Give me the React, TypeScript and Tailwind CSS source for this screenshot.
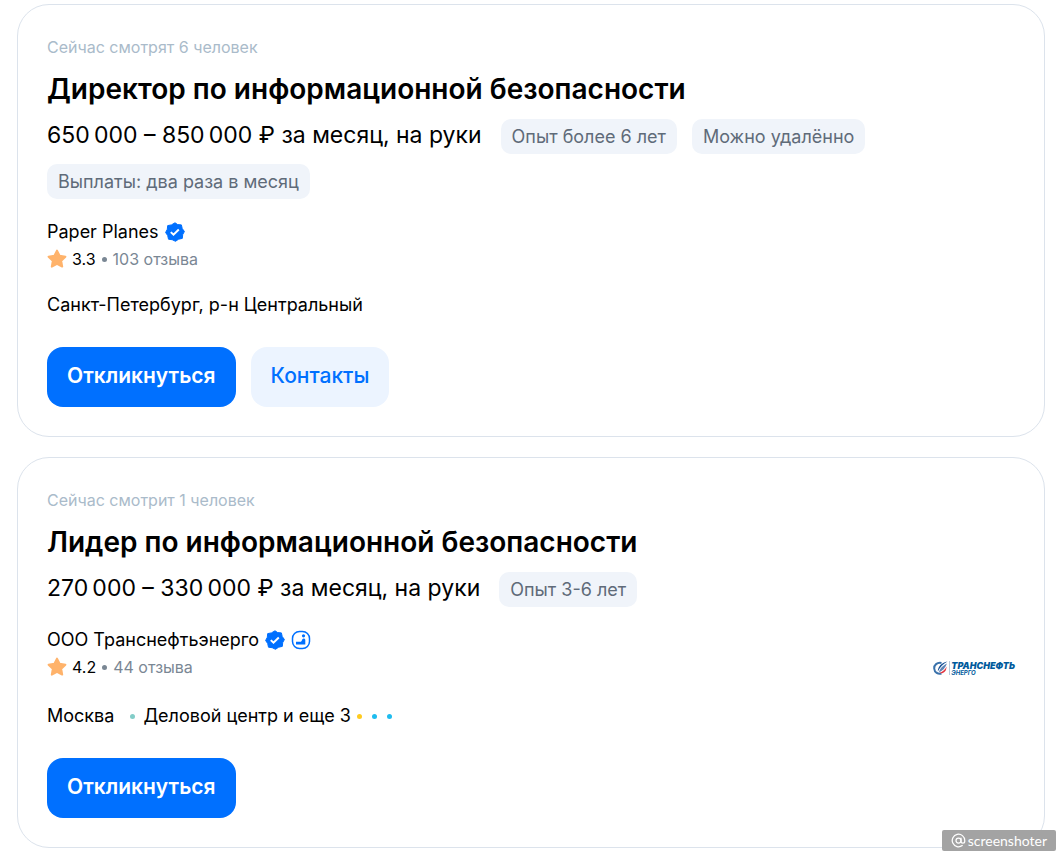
import { AtSign } from "lucide-react";
import type { ReactNode } from "react";

type Vacancy = {
  id: number;
  viewers: string;
  title: string;
  salary: string;
  tags: string[];
  company: string;
  accredited?: boolean;
  rating: string;
  reviews: string;
  location: ReactNode;
  logo?: ReactNode;
  hasContacts?: boolean;
};

function VerifiedIcon() {
  return (
    <svg aria-hidden="true" className="size-5 shrink-0" viewBox="0 0 20 20">
      <path
        d="M10 .8 12.700 2.600 16.400 2.900 17.200 6.500 19.400 9.500 17.700 12.600 17.300 16.400 13.600 17.200 10.500 19.300 7.200 17.700 3.500 17.200 2.700 13.500.6 10.500 2.300 7.300 2.700 3.600 6.400 2.900Z"
        fill="#0070ff"
        stroke="#0070ff"
        strokeLinejoin="round"
      />
      <path d="m5.800 10.100 2.700 2.600 5.300-5.200" fill="none" stroke="#fff" strokeWidth="2" />
    </svg>
  );
}

function AccreditedIcon() {
  return (
    <svg aria-hidden="true" className="size-5 shrink-0" viewBox="0 0 20 20">
      <rect fill="none" height="17" rx="7" stroke="#0070ff" strokeWidth="1.5" width="17" x="1.5" y="1.5" />
      <circle cx="12.5" cy="5.8" fill="#0070ff" r="1.6" />
      <path d="M5 14.500v-2.700h4.500c1.600 0 1.300-3.300 3.100-3.300 1 0 1.700.6 1.700 1.600v4.400Z" fill="#0070ff" />
    </svg>
  );
}

function StarIcon() {
  return (
    <svg aria-hidden="true" className="size-5 shrink-0" viewBox="0 0 20 20">
      <path
        d="m10 1.600 2.600 5.200 5.800.9-4.200 4.100 1 5.800-5.200-2.700-5.200 2.700 1-5.800L1.600 7.700l5.800-.9Z"
        fill="#ffb36b"
        stroke="#ffb36b"
        strokeLinejoin="round"
        strokeWidth="2"
      />
    </svg>
  );
}

function TransneftLogo() {
  return (
    <div className="flex items-center font-['Inter',sans-serif] text-[#005a9c]">
      <svg aria-hidden="true" className="h-4 w-[18px]" viewBox="0 0 18 16">
        <path d="M8.500 3C4 2.200 1 5 1.200 8.500 1.500 12.500 5 14.500 8.500 13.600" fill="none" stroke="#3a72ab" strokeWidth="2" />
        <path d="M14.500 1.500C9 2.500 5 6 4.800 11.500 7 7 10 4 14.500 1.500Z" fill="#174f94" />
        <path d="M14 3.500C10 5.500 6.500 8.500 6 12.500 9 11 12.500 8 14 3.500Z" fill="#5d83b5" />
        <path d="M13.500 6.500C12.500 9.500 10 11.500 6.500 13 10 14 13.500 12 13.500 6.500Z" fill="#e2343f" />
        <path d="M16.500 1v14" stroke="#b9c9dc" strokeWidth="1" />
      </svg>
      <div className="flex flex-col">
        <span className="font-black text-[9px] italic leading-[9px]">ТРАНСНЕФТЬ</span>
        <span className="font-bold text-[6px] italic leading-[6px]">ЭНЕРГО</span>
      </div>
    </div>
  );
}

function Dot({ className }: { className: string }) {
  return <span className={`size-[5px] shrink-0 rounded-full ${className}`} />;
}

const vacancies: Vacancy[] = [
  {
    id: 1,
    viewers: "Сейчас смотрят 6 человек",
    title: "Директор по информационной безопасности",
    salary: "650\u2009000 – 850\u2009000 ₽ за месяц, на руки",
    tags: ["Опыт более 6 лет", "Можно удалённо", "Выплаты: два раза в месяц"],
    company: "Paper Planes",
    rating: "3.3",
    reviews: "103 отзыва",
    location: "Санкт-Петербург, р-н Центральный",
    hasContacts: true,
  },
  {
    id: 2,
    viewers: "Сейчас смотрит 1 человек",
    title: "Лидер по информационной безопасности",
    salary: "270\u2009000 – 330\u2009000 ₽ за месяц, на руки",
    tags: ["Опыт 3-6 лет"],
    company: "ООО Транснефтьэнерго",
    accredited: true,
    rating: "4.2",
    reviews: "44 отзыва",
    location: (
      <span className="flex items-center pt-[3px]">
        Москва
        <Dot className="mr-2 ml-4 bg-[#82cdc8]" />
        Деловой центр и еще 3
        <span className="ml-1.5 flex gap-[10px]">
          <Dot className="bg-[#ffcb1f]" />
          <Dot className="bg-[#1ebcef]" />
          <Dot className="bg-[#1ebcef]" />
        </span>
      </span>
    ),
    logo: <TransneftLogo />,
  },
];

function VacancyCard({ vacancy }: { vacancy: Vacancy }) {
  return (
    <article className="rounded-[32px] border border-[#dce3ec] bg-white p-[29px]">
      <p className="text-[#aabbca] text-base leading-[26px]">{vacancy.viewers}</p>
      <h2 className="mt-2 font-semibold text-[28px] leading-[42px]">
        <a href="#vacancy">{vacancy.title}</a>
      </h2>
      <div className="mt-[9px] flex flex-wrap gap-x-[15px] gap-y-[10px]">
        <span className="pr-1 text-[23px] leading-[32px]">{vacancy.salary}</span>
        {vacancy.tags.map((tag) => (
          <span
            className="rounded-[10px] bg-[#f0f4fa] px-[11px] text-[#5f6b79] text-lg leading-[35px]"
            key={tag}
          >
            {tag}
          </span>
        ))}
      </div>
      <div className="mt-[19px] flex items-start justify-between">
        <div>
          <div className="flex items-center gap-1.5 text-lg leading-7">
            <a href="#company">{vacancy.company}</a>
            <VerifiedIcon />
            {vacancy.accredited && <AccreditedIcon />}
          </div>
          <div className="flex items-center gap-[5px] text-base leading-[26px]">
            <StarIcon />
            <span>{vacancy.rating}</span>
            <Dot className="mx-px bg-[#7a8794]" />
            <a className="text-[#7a8794]" href="#reviews">
              {vacancy.reviews}
            </a>
          </div>
          <div className="mt-[18px] text-lg leading-[30px]">{vacancy.location}</div>
        </div>
        {vacancy.logo && <div className="flex h-[84px] items-center">{vacancy.logo}</div>}
      </div>
      <div className="mt-[27px] flex gap-[15px] text-[21px]">
        <button className="h-[60px] rounded-2xl bg-[#0070ff] px-5 pb-0.5 font-semibold text-white" type="button">
          Откликнуться
        </button>
        {vacancy.hasContacts && (
          <button className="h-[60px] rounded-2xl bg-[#ecf4ff] px-5 pb-0.5 font-medium text-[#0070ff]" type="button">
            Контакты
          </button>
        )}
      </div>
    </article>
  );
}

export default function App() {
  return (
    <main className="relative bg-white px-[17px] pt-1 pb-[10px] font-['Inter','Liberation_Sans',sans-serif] text-black">
      <div className="flex flex-col gap-5">
        {vacancies.map((vacancy) => (
          <VacancyCard key={vacancy.id} vacancy={vacancy} />
        ))}
      </div>
      <div className="absolute right-[6px] bottom-[7px] flex h-[21px] items-center gap-[2px] rounded-xs bg-[#a3a3a3] px-[9px] font-['Lato',sans-serif] text-sm text-white">
        <AtSign className="size-[15px]" strokeWidth={2} />
        screenshoter
      </div>
    </main>
  );
}
